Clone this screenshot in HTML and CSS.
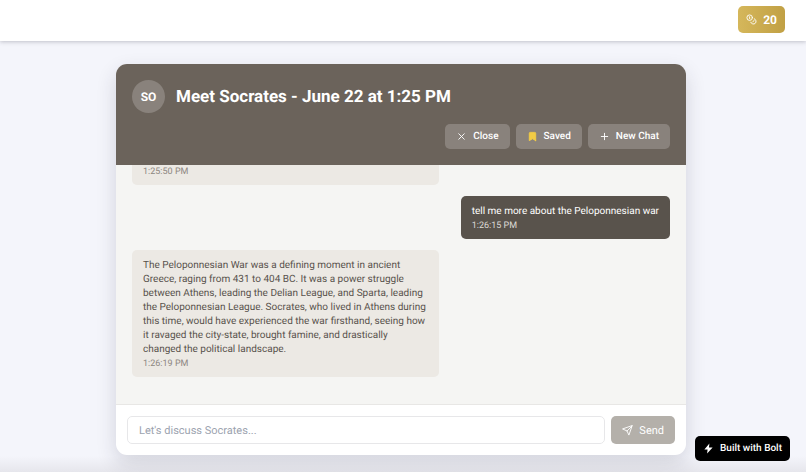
FILE: index.html
```html
<!DOCTYPE html>
<html lang="en">
<head>
  <meta charset="UTF-8">
  <meta name="viewport" content="width=device-width, initial-scale=1.0">
  <title>Meet Socrates</title>
  <link rel="stylesheet" href="styles.css">
</head>
<body>
  <header class="topbar">
    <button class="credits" type="button" aria-label="20 credits">
      <svg class="icon" viewBox="0 0 24 24"><circle cx="8" cy="8" r="6"/><path d="M18.09 10.37A6 6 0 1 1 10.34 18"/><path d="M7 6h1v4"/><path d="m16.71 13.88.7.71-2.82 2.82"/></svg>
      20
    </button>
  </header>

  <main class="page">
    <section class="chat">
      <div class="chat-header">
        <div class="chat-title">
          <div class="avatar">SO</div>
          <h1>Meet Socrates - June 22 at 1:25 PM</h1>
        </div>
        <div class="chat-actions">
          <button class="action" type="button">
            <svg class="icon" viewBox="0 0 24 24"><path d="M18 6 6 18"/><path d="m6 6 12 12"/></svg>
            Close
          </button>
          <button class="action" type="button">
            <svg class="icon saved" viewBox="0 0 24 24"><path d="m19 21-7-4-7 4V5a2 2 0 0 1 2-2h10a2 2 0 0 1 2 2v16z"/></svg>
            Saved
          </button>
          <button class="action" type="button">
            <svg class="icon" viewBox="0 0 24 24"><path d="M5 12h14"/><path d="M12 5v14"/></svg>
            New Chat
          </button>
        </div>
      </div>

      <div class="messages">
        <div class="message bot">
          <time>1:25:50 PM</time>
        </div>
        <div class="message user">
          <p>tell me more about the Peloponnesian war</p>
          <time>1:26:15 PM</time>
        </div>
        <div class="message bot">
          <p>The Peloponnesian War was a defining moment in ancient Greece, raging from 431 to 404 BC. It was a power struggle between Athens, leading the Delian League, and Sparta, leading the Peloponnesian League. Socrates, who lived in Athens during this time, would have experienced the war firsthand, seeing how it ravaged the city-state, brought famine, and drastically changed the political landscape.</p>
          <time>1:26:19 PM</time>
        </div>
      </div>

      <form class="composer">
        <input class="composer-input" type="text" placeholder="Let's discuss Socrates..." aria-label="Message">
        <button class="send" type="button">
          <svg class="icon" viewBox="0 0 24 24"><path d="m22 2-7 20-4-9-9-4Z"/><path d="M22 2 11 13"/></svg>
          Send
        </button>
      </form>
    </section>
  </main>

  <a class="bolt-badge" href="#">
    <svg viewBox="0 0 24 24"><path d="M14 1 3 14h7l-1 9 12-13h-8z"/></svg>
    Built with Bolt
  </a>
</body>
</html>
```

FILE: styles.css
```css
* {
  box-sizing: border-box;
}

body {
  margin: 0;
  min-height: 100vh;
  display: flex;
  flex-direction: column;
  font-family: Roboto, "Liberation Sans", sans-serif;
  font-size: 10px;
  text-rendering: geometricPrecision;
  background: linear-gradient(to bottom, transparent calc(100% - 16px), #e6e6ec), #f4f5fb;
}

button,
input {
  font-family: inherit;
  text-rendering: inherit;
}

button {
  display: flex;
  align-items: center;
  border: 0;
  color: #fff;
  cursor: pointer;
}

h1,
p {
  margin: 0;
}

.icon {
  width: 11px;
  height: 11px;
  flex: none;
  fill: none;
  stroke: currentColor;
  stroke-width: 2;
  stroke-linecap: round;
  stroke-linejoin: round;
}

/* top bar */
.topbar {
  display: flex;
  justify-content: flex-end;
  padding: 6px 21px 8px;
  background: #fff;
  box-shadow: 0 1px 4px rgba(40, 40, 60, 0.25);
}

.credits {
  gap: 6px;
  height: 27px;
  padding: 0 8px;
  border-radius: 5px;
  background: linear-gradient(to right, #d5b75b, #c1a044);
  font-size: 12px;
  font-weight: 700;
}

/* chat card */
.page {
  flex: 1;
  display: flex;
  padding: 23px 120px 17px 116px;
}

.chat {
  flex: 1;
  min-width: 0;
  display: flex;
  flex-direction: column;
  overflow: hidden;
  border-radius: 11px;
  background: #fff;
  box-shadow: 0 8px 20px rgba(40, 40, 60, 0.16);
}

.chat-header {
  padding: 16px;
  background: #6b635b;
  color: #fff;
}

.chat-title {
  display: flex;
  align-items: center;
  gap: 11px;
}

.chat-title h1 {
  font-size: 17px;
  font-weight: 700;
  line-height: 24px;
}

.avatar {
  display: flex;
  align-items: center;
  justify-content: center;
  width: 33px;
  height: 33px;
  border-radius: 50%;
  background: #89827c;
  font-size: 12px;
  font-weight: 700;
}

.chat-actions {
  display: flex;
  justify-content: flex-end;
  gap: 6px;
  margin-top: 11px;
}

.action {
  gap: 6px;
  height: 25px;
  padding: 0 11px;
  border-radius: 5px;
  background: #89827c;
  font-size: 10px;
  font-weight: 500;
}

.saved {
  color: #f2cc45;
  fill: currentColor;
}

/* messages */
.messages {
  flex: 1;
  display: flex;
  flex-direction: column;
  gap: 11px;
  padding: 0 16px 27px;
  background: #f5f5f3;
}

.message {
  max-width: 57%;
  padding: 9px 11px 7px;
  border-radius: 5px;
  line-height: 14px;
}

.message time {
  display: block;
  margin-top: 1px;
  font-size: 9px;
  line-height: 12px;
}

.bot {
  align-self: flex-start;
  background: #ece9e4;
  color: #58524c;
}

.bot time {
  color: #8c8781;
}

.message:first-child {
  width: 57%;
  padding-top: 0;
  border-radius: 0 0 5px 5px;
}

.user {
  align-self: flex-end;
  background: #59534c;
  color: #fff;
}

.user time {
  color: #dedbd7;
}

/* composer */
.composer {
  display: flex;
  gap: 6px;
  padding: 11px;
  border-top: 1px solid #e8e7e5;
}

.composer-input {
  flex: 1;
  min-width: 0;
  height: 28px;
  padding: 0 11px;
  border: 1px solid #e7e7e9;
  border-radius: 5px;
  background: #fff;
  font-size: 11px;
}

.composer-input::placeholder {
  color: #9ca3af;
}

.send {
  gap: 6px;
  padding: 0 11px;
  border-radius: 5px;
  background: #b4b0aa;
  font-size: 11px;
}

/* floating badge */
.bolt-badge {
  position: fixed;
  right: 16px;
  bottom: 11px;
  display: flex;
  align-items: center;
  gap: 6px;
  height: 25px;
  padding: 0 8px;
  border-radius: 5px;
  background: #000;
  color: #fff;
  font-size: 10px;
  font-weight: 500;
  text-decoration: none;
}

.bolt-badge svg {
  width: 11px;
  height: 11px;
  fill: currentColor;
}
```
